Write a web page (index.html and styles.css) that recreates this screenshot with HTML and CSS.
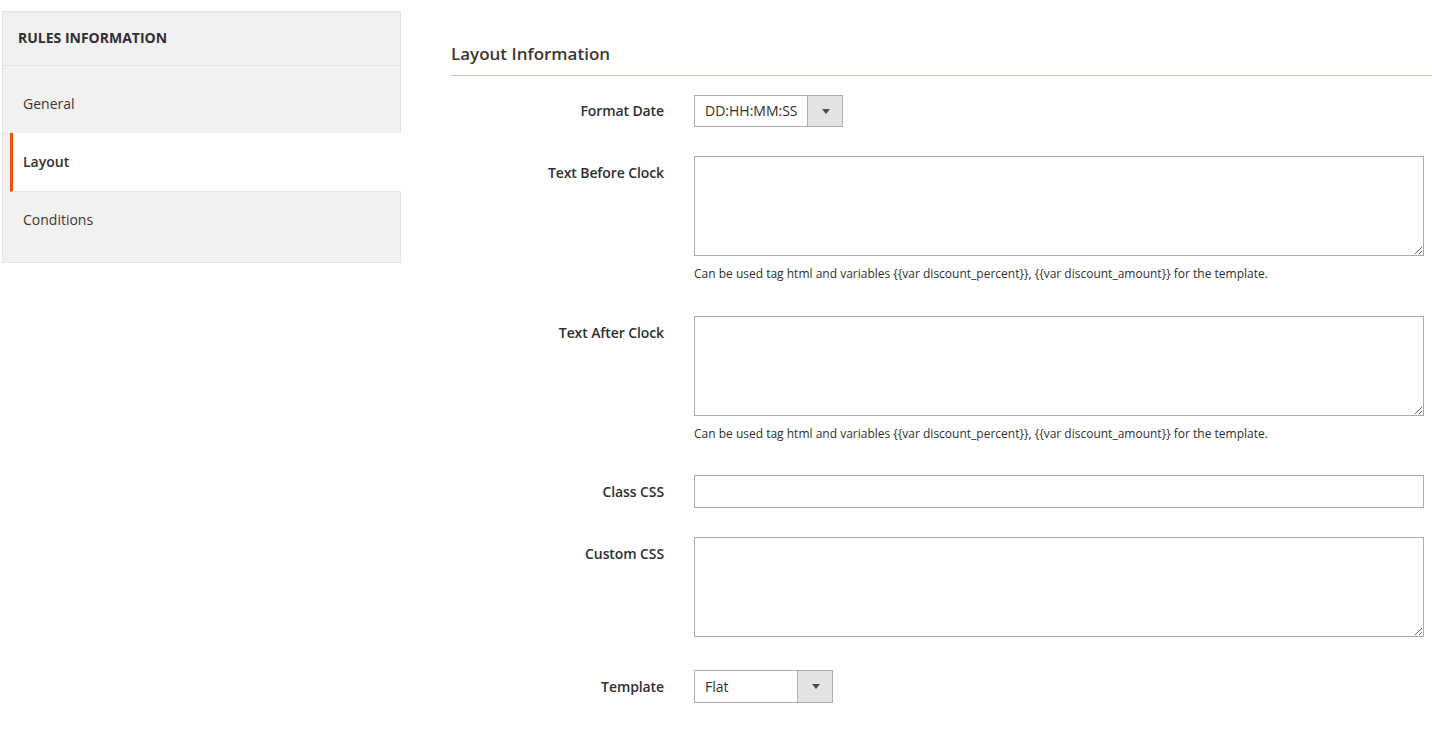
FILE: index.html
```html
<!DOCTYPE html>
<html lang="en">
<head>
<meta charset="utf-8">
<title>Layout Information</title>
<link rel="stylesheet" href="styles.css">
</head>
<body>
<div class="page">
  <aside class="sidebar">
    <div class="sidebar-title">Rules Information</div>
    <ul class="nav">
      <li class="nav-item">General</li>
      <li class="nav-item active">Layout</li>
      <li class="nav-item last">Conditions</li>
    </ul>
  </aside>
  <main class="content">
    <h2 class="section-title">Layout Information</h2>
    <div class="field gap-29">
      <label class="field-label label-select">Format Date</label>
      <div class="control">
        <div class="select select-date">
          <span class="select-value">DD:HH:MM:SS</span>
          <span class="select-arrow"><span class="tri"></span></span>
        </div>
      </div>
    </div>
    <div class="field gap-33">
      <label class="field-label">Text Before Clock</label>
      <div class="control">
        <textarea class="textarea"></textarea>
        <div class="note">Can be used tag html and variables {{var discount_percent}}, {{var discount_amount}} for the template.</div>
      </div>
    </div>
    <div class="field gap-32">
      <label class="field-label">Text After Clock</label>
      <div class="control">
        <textarea class="textarea"></textarea>
        <div class="note">Can be used tag html and variables {{var discount_percent}}, {{var discount_amount}} for the template.</div>
      </div>
    </div>
    <div class="field gap-29">
      <label class="field-label">Class CSS</label>
      <div class="control">
        <input class="input" type="text">
      </div>
    </div>
    <div class="field gap-33">
      <label class="field-label">Custom CSS</label>
      <div class="control">
        <textarea class="textarea"></textarea>
      </div>
    </div>
    <div class="field">
      <label class="field-label">Template</label>
      <div class="control">
        <div class="select select-template">
          <span class="select-value">Flat</span>
          <span class="select-arrow"><span class="tri"></span></span>
        </div>
      </div>
    </div>
  </main>
</div>
</body>
</html>
```

FILE: styles.css
```css
* { box-sizing: border-box; }
html, body { margin: 0; padding: 0; background: #fff; }
body {
  font-family: "Open Sans", "Liberation Sans", sans-serif;
  color: #303030;
  font-size: 14px;
}
.page {
  display: flex;
  align-items: flex-start;
  padding-left: 2px;
}
.sidebar {
  width: 399px;
  margin-top: 11px;
  background: #f1f1f1;
  border: 1px solid #e3e3e3;
  flex: none;
}
.sidebar-title {
  height: 54px;
  line-height: 52px;
  padding-left: 15px;
  border-bottom: 1px solid #e3e3e3;
  font-weight: 700;
  font-size: 14px;
  text-transform: uppercase;
  color: #303030;
}
.nav {
  list-style: none;
  margin: 0;
  padding: 10px 0 13px;
}
.nav-item {
  height: 58px;
  line-height: 56px;
  padding-left: 20px;
  border-bottom: 1px solid #e3e3e3;
  font-size: 14px;
  color: #41362f;
}
.nav-item.last { border-bottom: 0; height: 57px; }
.nav-item.active {
  background: #fff;
  margin-left: 7px;
  margin-right: -1px;
  margin-top: -1px;
  height: 59px;
  line-height: 58px;
  padding-left: 10px;
  border-left: 3px solid #eb5202;
  font-weight: 600;
  color: #303030;
}
.content {
  flex: 1;
  margin-left: 50px;
  margin-top: 42px;
}
.section-title {
  margin: 0 0 19px;
  font-size: 17px;
  font-weight: 600;
  line-height: 24px;
  padding-bottom: 9px;
  border-bottom: 1px solid #cac3b4;
  color: #41362f;
}
.field {
  display: flex;
  align-items: flex-start;
  padding-right: 8px;
}
.gap-29 { margin-bottom: 29px; }
.gap-32 { margin-bottom: 32px; }
.gap-33 { margin-bottom: 33px; }
.field-label {
  width: 213px;
  flex: none;
  text-align: right;
  font-weight: 600;
  font-size: 14px;
  line-height: 19px;
  padding-top: 7px;
  letter-spacing: -0.1px;
  color: #303030;
}
.field-label.label-select { padding-top: 6px; }
.control {
  margin-left: 30px;
  width: 730px;
}
.select {
  display: flex;
  height: 32px;
  border: 1px solid #adadad;
  background: #fff;
}
.select-date { width: 149px; }
.select-template { width: 139px; height: 33px; }
.select-value {
  flex: 1;
  padding-left: 10px;
  line-height: 29px;
  font-size: 14px;
  color: #303030;
}
.select-template .select-value { line-height: 31px; }
.select-arrow {
  width: 35px;
  flex: none;
  border-left: 1px solid #adadad;
  background: #e3e3e3;
  display: flex;
  align-items: center;
  justify-content: center;
}
.tri {
  width: 0;
  height: 0;
  border-left: 4px solid transparent;
  border-right: 4px solid transparent;
  border-top: 5px solid #514943;
  margin-left: 1px;
}
.textarea {
  display: block;
  width: 730px;
  height: 100px;
  border: 1px solid #adadad;
  margin: 0;
  padding: 6px 10px;
  font-family: inherit;
  font-size: 14px;
  border-radius: 0;
  background: #fff;
  outline: none;
}
.input {
  display: block;
  width: 730px;
  height: 33px;
  border: 1px solid #adadad;
  margin: 0;
  padding: 0 10px;
  font-family: inherit;
  font-size: 14px;
  border-radius: 0;
  background: #fff;
  outline: none;
}
.note {
  margin-top: 9px;
  font-size: 12px;
  line-height: 18px;
  color: #303030;
}
```
